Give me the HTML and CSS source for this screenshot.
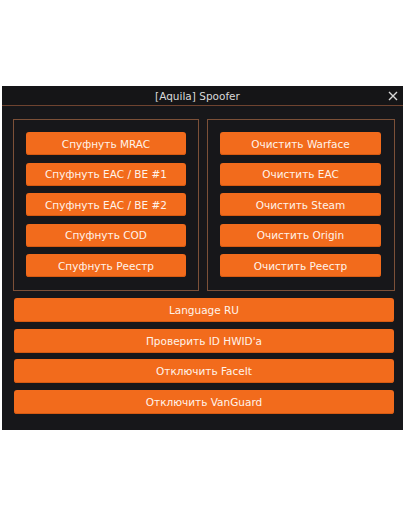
FILE: index.html
```html
<!DOCTYPE html>
<html>
<head>
<meta charset="utf-8">
<link rel="stylesheet" href="styles.css">
</head>
<body>
<div class="window">
  <div class="titlebar">
    <span class="title">[Aquila] Spoofer</span>
    <span class="close"><svg width="10" height="10" viewBox="0 0 10 10"><path d="M1 1 L9 9 M9 1 L1 9" stroke="#d8d8d8" stroke-width="1.4" fill="none"/></svg></span>
  </div>
  <div class="content">
    <div class="groups">
      <div class="group left">
        <button class="btn">Спуфнуть MRAC</button>
        <button class="btn">Спуфнуть EAC / BE #1</button>
        <button class="btn">Спуфнуть EAC / BE #2</button>
        <button class="btn">Спуфнуть COD</button>
        <button class="btn">Спуфнуть Реестр</button>
      </div>
      <div class="group right">
        <button class="btn">Очистить Warface</button>
        <button class="btn">Очистить EAC</button>
        <button class="btn">Очистить Steam</button>
        <button class="btn">Очистить Origin</button>
        <button class="btn">Очистить Реестр</button>
      </div>
    </div>
    <div class="wide">
      <button class="btn big">Language RU</button>
      <button class="btn big">Проверить ID HWID'a</button>
      <button class="btn big">Отключить FaceIt</button>
      <button class="btn big">Отключить VanGuard</button>
    </div>
  </div>
</div>
</body>
</html>
```
FILE: styles.css
```css
html, body {
  margin: 0;
  padding: 0;
  background: #ffffff;
  width: 406px;
  height: 516px;
}
body {
  padding-top: 86px;
  box-sizing: border-box;
}
.window {
  margin-left: 2px;
  width: 401px;
  height: 344px;
  background: #17171a;
  font-family: "DejaVu Sans", Verdana, sans-serif;
  box-sizing: border-box;
}
.titlebar {
  height: 19px;
  border-bottom: 1.5px solid #6e4330;
  display: flex;
  align-items: center;
  justify-content: center;
  position: relative;
  background: #151517;
}
.title {
  color: #d9d9d9;
  font-size: 10.5px;
  margin-left: -10px;
}
.close {
  position: absolute;
  right: 5px;
  top: 5px;
  width: 10px;
  height: 10px;
  display: block;
  line-height: 0;
}
.content {
  padding: 13px 8px 0 11px;
}
.groups {
  display: flex;
  gap: 8px;
}
.group {
  border: 1px solid #7c5038;
  display: flex;
  flex-direction: column;
  gap: 7.5px;
  box-sizing: border-box;
  height: 172px;
  padding-top: 12px;
}
.group.left {
  width: 186px;
  padding-left: 12px;
  padding-right: 12px;
}
.group.right {
  width: 188px;
  padding-left: 12px;
  padding-right: 13px;
}
.btn {
  display: block;
  width: 100%;
  height: 23px;
  border: none;
  border-radius: 3px;
  background: #f26b1c;
  color: #fff3ea;
  font-family: "DejaVu Sans", Verdana, sans-serif;
  font-size: 10.5px;
  padding: 0;
  margin: 0;
  box-shadow: inset 0 -1px 0 #d65a12;
}
.wide {
  margin-top: 7px;
  margin-left: 1px;
  width: 380px;
  display: flex;
  flex-direction: column;
  gap: 6.5px;
}
.btn.big {
  height: 24px;
}
```
